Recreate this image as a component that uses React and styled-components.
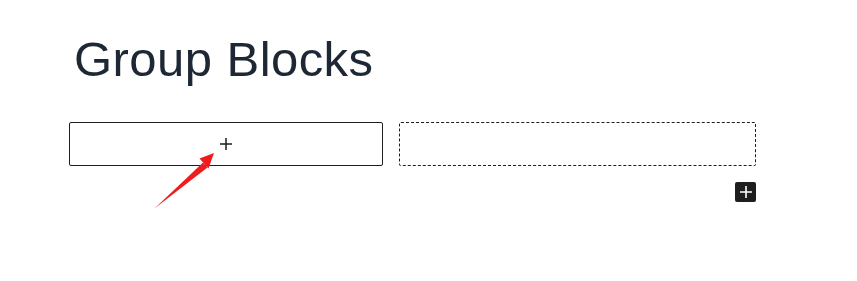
import React from 'react';
import styled, { createGlobalStyle } from 'styled-components';

const GlobalStyle = createGlobalStyle`
  body {
    margin: 0;
    background: #ffffff;
    font-family: "Liberation Sans", Arial, sans-serif;
  }
`;

const Page = styled.div`
  position: relative;
  width: 857px;
  height: 281px;
  padding: 31px 0 0 69px;
  box-sizing: border-box;
`;

const Title = styled.h1`
  margin: 0 0 35px 5px;
  font-size: 49px;
  line-height: 56px;
  font-weight: 400;
  letter-spacing: 0.45px;
  color: #1e2734;
`;

const Columns = styled.div`
  display: grid;
  grid-template-columns: 314px 357px;
  column-gap: 16px;
`;

const Column = styled.div`
  height: 44px;
  box-sizing: border-box;
  border: 1px ${(p) => (p.$placeholder ? 'dashed' : 'solid')} #1e1e1e;
  border-radius: 2px;
  display: flex;
  align-items: center;
  justify-content: center;
`;

const Appender = styled.div`
  display: flex;
  justify-content: flex-end;
  width: 687px;
  margin-top: 16px;
`;

const AddButton = styled.div`
  width: 21px;
  height: 20px;
  border-radius: 2px;
  background: #1e1e1e;
  display: flex;
  align-items: center;
  justify-content: center;
`;

const Arrow = styled.svg`
  position: absolute;
  left: 150px;
  top: 148px;
`;

const Plus = ({ size = 12, color = '#1e1e1e', width = 1.5 }) => (
  <svg width={size} height={size} viewBox="0 0 12 12">
    <path d="M6 0v12M0 6h12" stroke={color} strokeWidth={width} fill="none" />
  </svg>
);

export default function App() {
  return (
    <>
      <GlobalStyle />
      <Page>
        <Title>Group Blocks</Title>
        <Columns>
          <Column>
            <Plus size={12} />
          </Column>
          <Column $placeholder />
        </Columns>
        <Appender>
          <AddButton>
            <Plus size={12} color="#ffffff" width={1.6} />
          </AddButton>
        </Appender>
        <Arrow width="70" height="65" viewBox="0 0 70 65">
          <path d="M4.5 60.5 L53 14.5 L57.5 19.5 Z" fill="#ee1c1c" />
          <path d="M64 5 L49.5 10.5 L58.5 20.5 Z" fill="#ee1c1c" />
        </Arrow>
      </Page>
    </>
  );
}
